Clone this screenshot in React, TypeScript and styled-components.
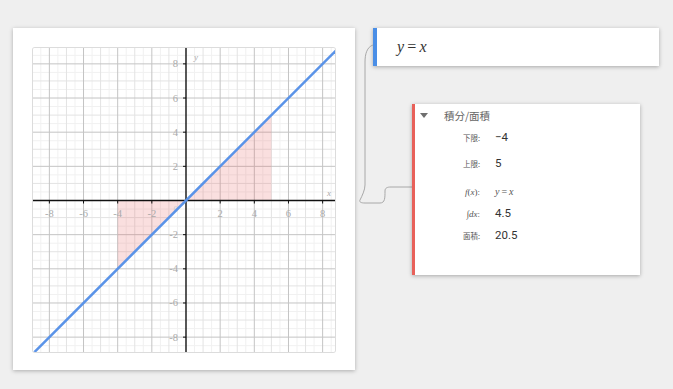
import React from 'react';
import styled, { createGlobalStyle } from 'styled-components';

const GlobalStyle = createGlobalStyle`
  html, body {
    margin: 0;
    padding: 0;
    background: #efefef;
    font-family: Roboto, "Liberation Sans", "Noto Sans CJK JP", sans-serif;
  }
`;

const Page = styled.div`
  display: flex;
  align-items: flex-start;
  gap: 18px;
  padding: 28px 0 0 13px;
  width: 673px;
  height: 389px;
  box-sizing: border-box;
`;

const GraphCard = styled.div`
  width: 342px;
  height: 342px;
  box-sizing: border-box;
  padding: 20px 20px 18px;
  background: #fff;
  box-shadow: 0 1px 4px rgba(0, 0, 0, 0.28);
`;

const GraphFrame = styled.div`
  width: 302px;
  height: 304px;
  border-radius: 2px;
  box-shadow: 0 0 0 1px #dcdcdc;
  overflow: hidden;
`;

const SidePanel = styled.div`
  position: relative;
  display: flex;
  flex-direction: column;
  gap: 38px;
`;

const ExprCard = styled.div`
  width: 286px;
  height: 38px;
  box-sizing: border-box;
  display: flex;
  align-items: center;
  padding-left: 20px;
  background: #fff;
  border-left: 4px solid #4a8ee6;
  box-shadow: 0 1px 4px rgba(0, 0, 0, 0.3);
  font-family: "Liberation Serif", serif;
  font-size: 16px;
  color: #333;
`;

const Math = styled.span<{ $size?: number; $color?: string }>`
  font-family: "Liberation Serif", serif;
  font-size: ${(p) => p.$size ?? 16}px;
  color: ${(p) => p.$color ?? '#333'};
  white-space: nowrap;
  i {
    font-style: italic;
  }
`;

const Eq = styled.span`
  margin: 0 0.2em;
  font-style: normal;
`;

const IntegralCard = styled.div`
  position: relative;
  z-index: 1;
  margin-left: 39px;
  width: 228px;
  height: 171px;
  box-sizing: border-box;
  background: #fff;
  border-left: 3px solid #e8615a;
  box-shadow: 0 1px 4px rgba(0, 0, 0, 0.3);
`;

const Header = styled.div`
  display: flex;
  align-items: center;
  height: 22px;
  padding-left: 5px;
  gap: 16px;
  font-family: "Noto Sans CJK JP", sans-serif;
  font-size: 10.5px;
  color: #666;
`;

const Caret = styled.span`
  width: 0;
  height: 0;
  border-left: 4px solid transparent;
  border-right: 4px solid transparent;
  border-top: 5px solid #6f6f6f;
`;

const Row = styled.div<{ $gap: number }>`
  display: grid;
  grid-template-columns: 65px 1fr;
  column-gap: 15px;
  align-items: center;
  height: 22px;
  margin-top: ${(p) => p.$gap}px;
`;

const Label = styled.span`
  justify-self: end;
  font-family: "Noto Sans CJK JP", sans-serif;
  font-size: 7.5px;
  color: #555;
`;

const Value = styled.span`
  font-family: Roboto, "Liberation Sans", sans-serif;
  font-size: 11.5px;
  color: #333;
`;

const Connector = styled.svg`
  position: absolute;
  left: -20px;
  top: 10px;
  width: 60px;
  height: 200px;
  overflow: visible;
  pointer-events: none;
`;

const W = 302;
const H = 304;
const OX = 153;
const OY = 152.5;
const S = 17.08;

const Graph = () => {
  const lines: React.ReactNode[] = [];
  for (let k = -20; k <= 20; k++) {
    const v = k / 2;
    if (v === 0) continue;
    const color = v % 2 === 0 ? '#c4c4c4' : Number.isInteger(v) ? '#e3e3e3' : '#f1f1f1';
    const x = OX + v * S;
    const y = OY - v * S;
    if (x > 0 && x < W)
      lines.push(<line key={'v' + k} x1={x} y1={0} x2={x} y2={H} stroke={color} strokeWidth={1} />);
    if (y > 0 && y < H)
      lines.push(<line key={'h' + k} x1={0} y1={y} x2={W} y2={y} stroke={color} strokeWidth={1} />);
  }
  // draw minors first, majors on top
  lines.sort((a: any, b: any) => {
    const rank = (c: string) => (c === '#c4c4c4' ? 2 : c === '#e3e3e3' ? 1 : 0);
    return rank(a.props.stroke) - rank(b.props.stroke);
  });

  const ticks = [-8, -6, -4, -2, 2, 4, 6, 8];
  const px = (v: number) => OX + v * S;
  const py = (v: number) => OY - v * S;

  return (
    <svg width={W} height={H} viewBox={`0 0 ${W} ${H}`}>
      <rect width={W} height={H} fill="#fff" />
      {lines}
      <polygon
        points={`${px(-4)},${py(0)} ${px(-4)},${py(-4)} ${px(5)},${py(5)} ${px(5)},${py(0)}`}
        fill="#e46060"
        fillOpacity={0.2}
      />
      <line x1={0} y1={OY} x2={W} y2={OY} stroke="#111" strokeWidth={1.4} />
      <line x1={OX} y1={0} x2={OX} y2={H} stroke="#111" strokeWidth={1.4} />
      {ticks.map((t) => (
        <g key={'t' + t}>
          <line x1={px(t)} y1={OY} x2={px(t)} y2={OY + 3} stroke="#111" strokeWidth={1} />
          <line x1={OX - 3} y1={py(t)} x2={OX} y2={py(t)} stroke="#111" strokeWidth={1} />
          <text
            x={px(t)}
            y={OY + 16}
            textAnchor="middle"
            fontFamily="Liberation Serif, serif"
            fontSize={10.5}
            fill="#aaa"
          >
            {t < 0 ? '-' + -t : t}
          </text>
          <text
            x={OX - 8}
            y={py(t) + 3.5}
            textAnchor="end"
            fontFamily="Liberation Serif, serif"
            fontSize={10.5}
            fill="#aaa"
          >
            {t < 0 ? '-' + -t : t}
          </text>
        </g>
      ))}
      <text x={OX - 8} y={OY + 11} textAnchor="end" fontFamily="Liberation Serif, serif" fontSize={9} fill="#ccc">
        0
      </text>
      <text x={OX + 8} y={12} fontFamily="Liberation Serif, serif" fontStyle="italic" fontSize={9} fill="#aaa">
        y
      </text>
      <text x={W - 8} y={OY - 5} fontFamily="Liberation Serif, serif" fontStyle="italic" fontSize={9} fill="#aaa">
        x
      </text>
      <line x1={px(-9.5)} y1={py(-9.5)} x2={px(9.5)} y2={py(9.5)} stroke="#5a93e8" strokeWidth={2.6} />
    </svg>
  );
};

const rows = [
  { gap: 0, label: '下限:', value: <Value>−4</Value> },
  { gap: 4, label: '上限:', value: <Value>5</Value> },
  {
    gap: 6,
    label: (
      <Math $size={9} $color="#555">
        <i>f</i>(<i>x</i>):
      </Math>
    ),
    value: (
      <Math $size={10} $color="#555">
        <i>y</i>
        <Eq>=</Eq>
        <i>x</i>
      </Math>
    ),
  },
  {
    gap: 0,
    label: (
      <Math $size={9} $color="#555">
        <i>∫dx</i>:
      </Math>
    ),
    value: <Value>4.5</Value>,
  },
  { gap: 0, label: '面積:', value: <Value>20.5</Value> },
];

export default function App() {
  return (
    <>
      <GlobalStyle />
      <Page>
        <GraphCard>
          <GraphFrame>
            <Graph />
          </GraphFrame>
        </GraphCard>
        <SidePanel>
          <Connector viewBox="-20 10 60 200">
            <path
              d="M0 17 C -6 19, -8 26, -8 34 L -8 157 C -8 162, -11 168, -13 172 C -14 174, -12 175, -8 175 L 7 175 C 12 175, 12 170, 12 163 C 12 160, 14 159, 18 159 L 39 159"
              fill="none"
              stroke="#a8a8a8"
              strokeWidth={1}
            />
          </Connector>
          <ExprCard>
            <Math>
              <i>y</i>
              <Eq>=</Eq>
              <i>x</i>
            </Math>
          </ExprCard>
          <IntegralCard>
            <Header>
              <Caret />
              <span>積分/面積</span>
            </Header>
            {rows.map((r, i) => (
              <Row key={i} $gap={r.gap}>
                <Label>{r.label}</Label>
                {r.value}
              </Row>
            ))}
          </IntegralCard>
        </SidePanel>
      </Page>
    </>
  );
}
